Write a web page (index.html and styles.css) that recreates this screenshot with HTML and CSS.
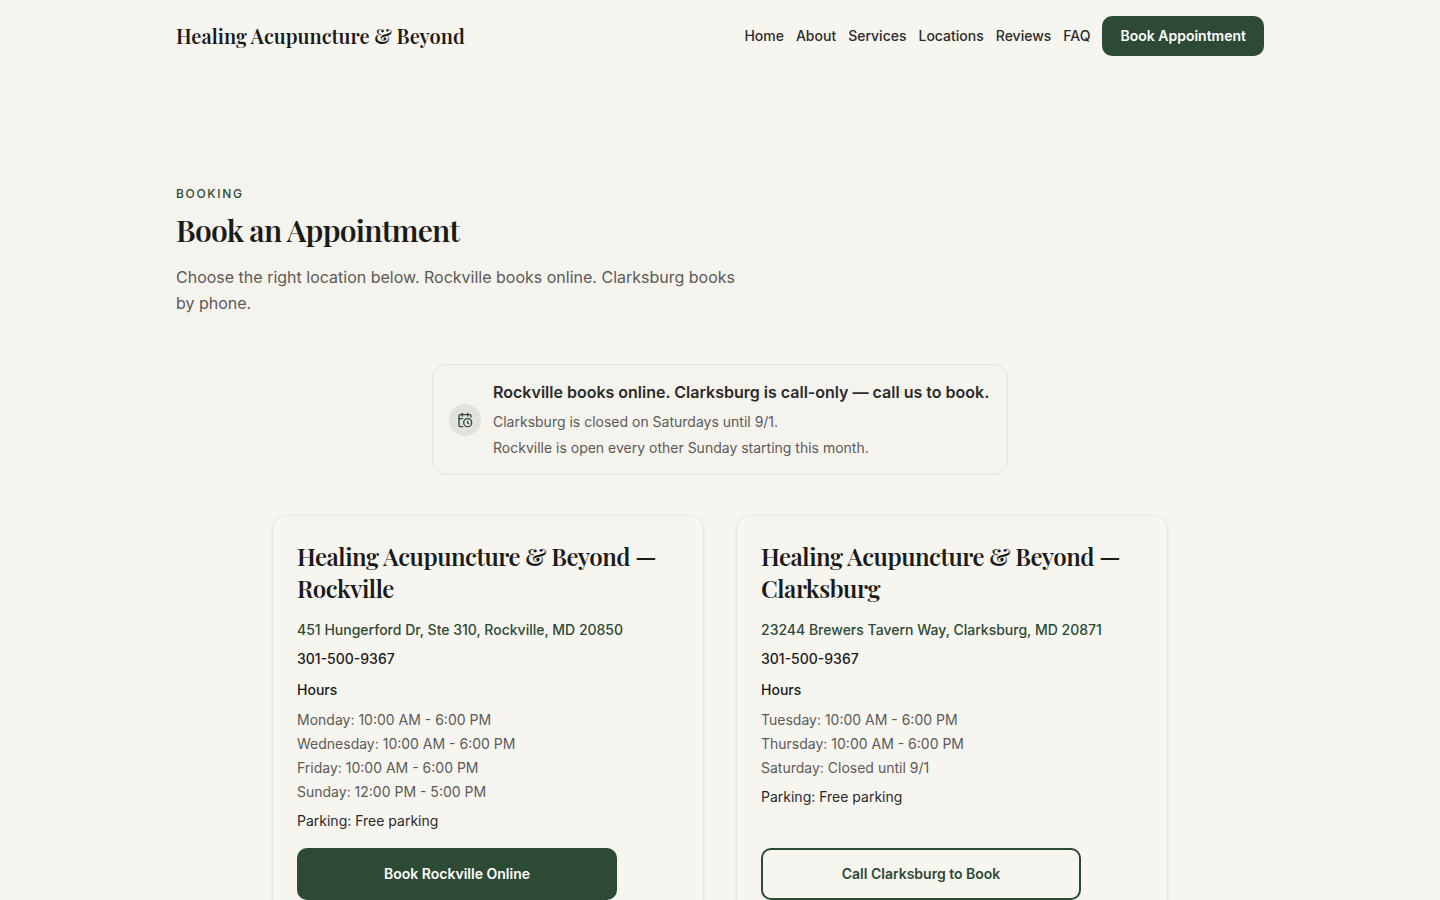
FILE: index.html
```
<!DOCTYPE html>
<html lang="en">

<head>
    <meta charset="UTF-8">
    <meta name="viewport" content="width=device-width, initial-scale=1.0">
    <title>Book an Appointment | Healing Acupuncture &amp; Beyond</title>
    <link rel="stylesheet" href="styles.css">
</head>

<body>
    <header class="header">
        <div class="container header-inner">
            <a href="#" class="brand">Healing Acupuncture &amp; Beyond</a>
            <nav class="nav">
                <a href="#">Home</a>
                <a href="#">About</a>
                <a href="#">Services</a>
                <a href="#">Locations</a>
                <a href="#">Reviews</a>
                <a href="#">FAQ</a>
                <a href="#locations" class="nav-btn">Book Appointment</a>
            </nav>
        </div>
    </header>

    <main>
        <section class="hero">
            <div class="container">
                <p class="eyebrow">Booking</p>
                <h1>Book an Appointment</h1>
                <p class="lead">Choose the right location below. Rockville books online. Clarksburg books by phone.</p>
            </div>
        </section>

        <section class="booking" id="locations">
            <div class="notice">
                <span class="notice-icon">
                    <svg viewBox="0 0 24 24" width="16" height="16" aria-hidden="true">
                        <path d="M21 7.5V6a2 2 0 0 0-2-2H5a2 2 0 0 0-2 2v14a2 2 0 0 0 2 2h3.5" />
                        <path d="M16 2v4" />
                        <path d="M8 2v4" />
                        <path d="M3 10h5" />
                        <path d="M17.5 17.5 16 16.3V14" />
                        <circle cx="16" cy="16" r="6" />
                    </svg>
                </span>
                <div>
                    <p class="notice-title">Rockville books online. Clarksburg is call-only — call us to book.</p>
                    <p class="notice-text">Clarksburg is closed on Saturdays until 9/1.</p>
                    <p class="notice-text">Rockville is open every other Sunday starting this month.</p>
                </div>
            </div>

            <div class="cards">
                <article class="card">
                    <h2>Healing Acupuncture &amp; Beyond — Rockville</h2>
                    <a href="#" class="address">451 Hungerford Dr, Ste 310, Rockville, MD 20850</a>
                    <a href="tel:301-500-9367" class="phone">301-500-9367</a>
                    <h3>Hours</h3>
                    <ul class="hours">
                        <li>Monday: 10:00 AM - 6:00 PM</li>
                        <li>Wednesday: 10:00 AM - 6:00 PM</li>
                        <li>Friday: 10:00 AM - 6:00 PM</li>
                        <li>Sunday: 12:00 PM - 5:00 PM</li>
                    </ul>
                    <p class="parking">Parking: Free parking</p>
                    <a href="#" class="btn">Book Rockville Online</a>
                </article>

                <article class="card">
                    <h2>Healing Acupuncture &amp; Beyond — Clarksburg</h2>
                    <a href="#" class="address">23244 Brewers Tavern Way, Clarksburg, MD 20871</a>
                    <a href="tel:301-500-9367" class="phone">301-500-9367</a>
                    <h3>Hours</h3>
                    <ul class="hours">
                        <li>Tuesday: 10:00 AM - 6:00 PM</li>
                        <li>Thursday: 10:00 AM - 6:00 PM</li>
                        <li>Saturday: Closed until 9/1</li>
                    </ul>
                    <p class="parking">Parking: Free parking</p>
                    <a href="tel:301-500-9367" class="btn btn-outline">Call Clarksburg to Book</a>
                </article>
            </div>
        </section>
    </main>
</body>

</html>
```
FILE: styles.css
```
* {
    margin: 0;
    padding: 0;
    box-sizing: border-box;
}

body {
    font-family: Inter, "Liberation Sans", sans-serif;
    font-size: 14px;
    line-height: 24px;
    color: #2b2b29;
    background: #f7f5f0;
}

a {
    color: inherit;
    text-decoration: none;
}

ul {
    list-style: none;
}

.container {
    max-width: 1136px;
    margin: 0 auto;
    padding: 0 24px;
}

/* header */
.header-inner {
    display: flex;
    align-items: center;
    justify-content: space-between;
    min-height: 72px;
}

.brand,
h1,
h2 {
    font-family: "Playfair Display", "Liberation Serif", serif;
    font-weight: 600;
    color: #1a1a18;
}

.brand {
    font-size: 20px;
}

.nav {
    display: flex;
    align-items: center;
    gap: 12px;
    font-weight: 500;
}

.nav-btn {
    padding: 8px 18px;
    border-radius: 10px;
    font-weight: 600;
    color: #fff;
    background: #2d4a35;
}

/* hero */
.hero {
    padding: 112px 0 24px;
    background: #f5f3ee;
}

.eyebrow {
    font-size: 12px;
    font-weight: 500;
    line-height: 20px;
    letter-spacing: 0.14em;
    text-transform: uppercase;
    color: #2d4a35;
}

h1 {
    margin: 6px 0 14px;
    font-size: 30px;
    line-height: 40px;
    letter-spacing: -0.025em;
}

.lead {
    max-width: 576px;
    font-size: 16px;
    line-height: 26px;
    color: #5c5a56;
}

/* booking */
.booking {
    padding: 24px 24px 64px;
}

.notice {
    display: flex;
    align-items: center;
    gap: 12px;
    max-width: 576px;
    margin: 0 auto 40px;
    padding: 15px 16px;
    border: 1px solid #e5e4df;
    border-radius: 14px;
    background: #f5f3ee;
}

.notice-icon {
    display: flex;
    align-items: center;
    justify-content: center;
    flex: none;
    width: 32px;
    height: 32px;
    border-radius: 50%;
    background: #e2e2dc;
}

.notice-icon svg {
    fill: none;
    stroke: #2d4a35;
    stroke-width: 2;
    stroke-linecap: round;
    stroke-linejoin: round;
}

.notice-title {
    margin-bottom: 7px;
    font-size: 16px;
    font-weight: 600;
}

.notice-text {
    line-height: 22px;
    color: #5c5a56;
}

.notice-text + .notice-text {
    margin-top: 4px;
}

.cards {
    display: grid;
    grid-template-columns: 1fr 1fr;
    gap: 32px;
    max-width: 896px;
    margin: 0 auto;
}

.card {
    display: flex;
    flex-direction: column;
    align-items: flex-start;
    padding: 24px;
    border: 1px solid #e9e7e2;
    border-radius: 14px;
    box-shadow: 0 1px 3px rgba(0, 0, 0, 0.08);
}

h2 {
    margin-bottom: 14px;
    font-size: 24px;
    line-height: 32px;
    letter-spacing: -0.02em;
}

.address {
    font-weight: 500;
    color: #2d4a35;
}

.phone {
    margin-top: 5px;
    font-weight: 500;
    color: #1a1a18;
}

h3 {
    margin: 7px 0 6px;
    font-size: 14px;
    font-weight: 500;
    color: #1a1a18;
}

.hours {
    color: #5c5a56;
}

.parking {
    margin: 5px 0 15px;
}

.btn {
    width: 100%;
    max-width: 320px;
    margin-top: auto;
    padding: 12px;
    border: 2px solid #2d4a35;
    border-radius: 10px;
    font-weight: 600;
    text-align: center;
    color: #fff;
    background: #2d4a35;
}

.btn-outline {
    color: #2d4a35;
    background: none;
}

@media (max-width: 800px) {
    .header-inner,
    .nav {
        flex-wrap: wrap;
    }

    .cards {
        grid-template-columns: 1fr;
    }
}
```
